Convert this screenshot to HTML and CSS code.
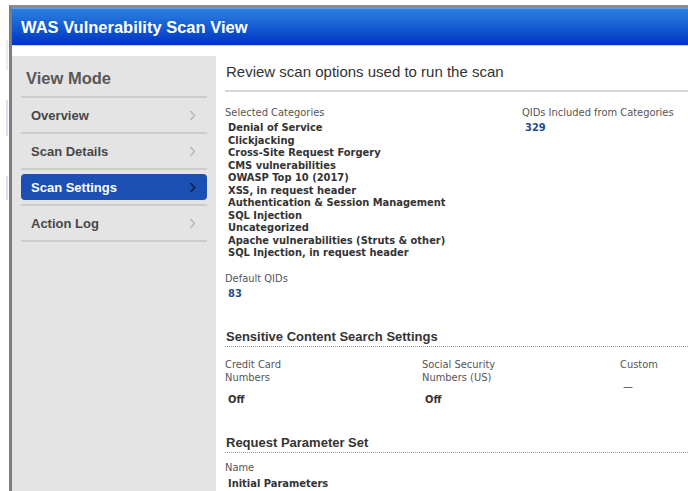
FILE: index.html
```html
<!DOCTYPE html>
<html lang="en">
<head>
<meta charset="utf-8">
<title>WAS Vulnerability Scan View</title>
<link rel="stylesheet" href="styles.css">
</head>
<body>
<div class="page">
  <div class="page-edge">
    <span class="ghost ghost-gray"></span>
    <span class="ghost ghost-blue"></span>
    <span class="ghost ghost-blue second"></span>
  </div>

  <div class="dialog">
    <header class="titlebar">
      <h1 class="titlebar-text">WAS Vulnerability Scan View</h1>
    </header>

    <div class="dialog-body">
      <nav class="sidebar">
        <div class="sidebar-title">View Mode</div>
        <ul class="nav">
          <li class="nav-item">
            <a class="nav-link">Overview
              <svg class="chevron" width="7" height="11" viewBox="0 0 7 11"><polyline points="1.5,1 5.5,5.5 1.5,10"/></svg>
            </a>
          </li>
          <li class="nav-item">
            <a class="nav-link">Scan Details
              <svg class="chevron" width="7" height="11" viewBox="0 0 7 11"><polyline points="1.5,1 5.5,5.5 1.5,10"/></svg>
            </a>
          </li>
          <li class="nav-item">
            <a class="nav-link active">Scan Settings
              <svg class="chevron" width="7" height="11" viewBox="0 0 7 11"><polyline points="1.5,1 5.5,5.5 1.5,10"/></svg>
            </a>
          </li>
          <li class="nav-item">
            <a class="nav-link">Action Log
              <svg class="chevron" width="7" height="11" viewBox="0 0 7 11"><polyline points="1.5,1 5.5,5.5 1.5,10"/></svg>
            </a>
          </li>
        </ul>
      </nav>

      <main class="content">
        <h2 class="lead">Review scan options used to run the scan</h2>

        <div class="summary">
          <div class="field">
            <div class="field-label">Selected Categories</div>
            <ul class="field-list">
              <li>Denial of Service</li>
              <li>Clickjacking</li>
              <li>Cross-Site Request Forgery</li>
              <li>CMS vulnerabilities</li>
              <li>OWASP Top 10 (2017)</li>
              <li>XSS, in request header</li>
              <li>Authentication &amp; Session Management</li>
              <li>SQL Injection</li>
              <li>Uncategorized</li>
              <li>Apache vulnerabilities (Struts &amp; other)</li>
              <li>SQL Injection, in request header</li>
            </ul>
            <div class="field spaced">
              <div class="field-label">Default QIDs</div>
              <div class="field-value number">83</div>
            </div>
          </div>
          <div class="field">
            <div class="field-label">QIDs Included from Categories</div>
            <div class="field-value number">329</div>
          </div>
        </div>

        <h3 class="section-title">Sensitive Content Search Settings</h3>
        <div class="columns">
          <div class="field">
            <div class="field-label narrow">Credit Card Numbers</div>
            <div class="field-value setting">Off</div>
          </div>
          <div class="field">
            <div class="field-label narrow">Social Security Numbers (US)</div>
            <div class="field-value setting">Off</div>
          </div>
          <div class="field">
            <div class="field-label narrow">Custom</div>
            <div class="field-value setting empty">—</div>
          </div>
        </div>

        <h3 class="section-title tight">Request Parameter Set</h3>
        <div class="field compact">
          <div class="field-label">Name</div>
          <div class="field-value">Initial Parameters</div>
        </div>
      </main>
    </div>
  </div>
</div>
</body>
</html>
```

FILE: styles.css
```css
html, body {
  margin: 0;
  padding: 0;
  height: 100%;
  overflow: hidden;
  background: #ffffff;
  font-family: "Liberation Sans", Arial, sans-serif;
}

.page {
  display: flex;
  height: 100%;
}

/* sliver of the page behind the modal */
.page-edge {
  width: 9px;
  flex: none;
  display: flex;
  flex-direction: column;
  align-items: flex-end;
  padding-right: 1px;
  box-sizing: border-box;
}

.ghost {
  display: block;
  width: 2px;
}

.ghost-gray {
  margin-top: 40px;
  height: 30px;
  background: #ececec;
}

.ghost-blue {
  margin-top: 30px;
  height: 36px;
  background: #d6e2f4;
}

.ghost-blue.second {
  margin-top: 40px;
  height: 24px;
}

/* modal window */
.dialog {
  flex: 1;
  min-width: 0;
  margin-top: 5px;
  border-top: 3px solid #8c8c8c;
  border-left: 3px solid #7e7e7e;
  display: flex;
  flex-direction: column;
}

.titlebar {
  height: 36px;
  border-top: 1px solid #5c9fe8;
  border-bottom: 1px solid #d4d4d4;
  background: linear-gradient(to bottom, #2d80de 0%, #1660d4 45%, #0033c2 100%);
  padding-left: 9px;
  display: flex;
  align-items: center;
}

.titlebar-text {
  margin: 0;
  font-size: 16.5px;
  font-weight: bold;
  color: #ffffff;
}

.dialog-body {
  flex: 1;
  display: flex;
  min-height: 0;
}

/* left navigation */
.sidebar {
  width: 204px;
  flex: none;
  margin-top: 10px;
  background: #e4e4e4;
  padding: 0 9px;
  box-sizing: border-box;
}

.sidebar-title {
  height: 40px;
  line-height: 45px;
  padding-left: 5px;
  font-size: 16.5px;
  font-weight: bold;
  color: #575757;
  border-bottom: 2px solid #cdcdcd;
}

.nav {
  list-style: none;
  margin: 0;
  padding: 0;
}

.nav-item {
  height: 26px;
  padding: 4px 0;
  border-bottom: 2px solid #cdcdcd;
}

.nav-link {
  height: 26px;
  display: flex;
  align-items: center;
  justify-content: space-between;
  padding: 0 11px 0 10px;
  border-radius: 4px;
  font-size: 13px;
  font-weight: bold;
  color: #474747;
}

.chevron polyline {
  fill: none;
  stroke: #b4b4b4;
  stroke-width: 1.4;
}

.nav-link.active {
  background: #1c4fb4;
  color: #ffffff;
}

.nav-link.active .chevron polyline {
  stroke: #0f2150;
  stroke-width: 1.8;
}

/* main panel */
.content {
  flex: 1;
  min-width: 0;
  padding: 17px 0 0 9px;
  font-family: Tahoma, "DejaVu Sans Condensed", "DejaVu Sans", sans-serif;
}

.lead {
  margin: 0;
  font-family: "Liberation Sans", Arial, sans-serif;
  font-size: 15px;
  font-weight: normal;
  line-height: 18px;
  color: #333333;
  padding: 0 0 9px 1px;
  border-bottom: 2px solid #d6d6d6;
}

.summary {
  display: grid;
  grid-template-columns: 297px 1fr;
  margin-top: 14px;
}

.field-label {
  font-size: 11px;
  line-height: 13px;
  color: #555555;
}

.field-label.narrow {
  width: 90px;
}

.field-list {
  list-style: none;
  margin: 3px 0 0;
  padding: 0 0 0 3px;
  font-size: 11px;
  line-height: 12.5px;
  font-weight: bold;
  color: #333333;
}

.field-value {
  margin-top: 3px;
  padding-left: 3px;
  font-size: 11px;
  line-height: 12.5px;
  font-weight: bold;
  color: #333333;
}

.field-value.number {
  color: #1f4d8e;
}

.field.spaced {
  margin-top: 12px;
}

.section-title {
  margin: 29px 0 0;
  padding: 0 0 2px 1px;
  font-family: "Liberation Sans", Arial, sans-serif;
  font-size: 13px;
  line-height: 15px;
  font-weight: bold;
  color: #333333;
  border-bottom: 1px dotted #9a9a9a;
}

.section-title.tight {
  margin-top: 28px;
}

.columns {
  display: grid;
  grid-template-columns: 197px 198px 1fr;
  margin-top: 11px;
}

.field-value.setting {
  margin-top: 10px;
}

.field-value.empty {
  font-weight: normal;
  color: #444444;
}

.field.compact {
  margin-top: 8px;
}

.field.compact .field-value {
  margin-top: 4px;
}
```
